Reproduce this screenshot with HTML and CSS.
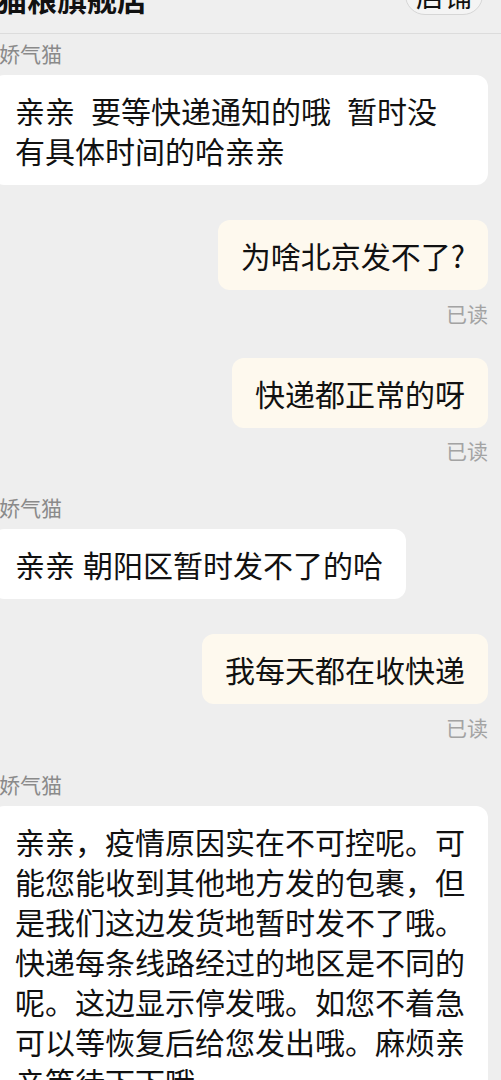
FILE: index.html
```html
<!DOCTYPE html>
<html lang="zh-CN">

<head>
  <meta charset="UTF-8">
  <meta name="viewport" content="width=device-width, initial-scale=1.0">
  <title>娇气猫</title>
  <link rel="stylesheet" href="styles.css">
</head>

<body>
  <header class="topbar">
    <h1 class="topbar__title">猫粮旗舰店</h1>
    <button class="topbar__shop">店铺</button>
  </header>

  <main class="chat">
    <div class="msg msg--in">
      <p class="msg__name">娇气猫</p>
      <p class="msg__bubble">亲亲  要等快递通知的哦  暂时没有具体时间的哈亲亲</p>
    </div>

    <div class="msg msg--out">
      <p class="msg__bubble">为啥北京发不了?</p>
      <p class="msg__read">已读</p>
    </div>

    <div class="msg msg--out">
      <p class="msg__bubble">快递都正常的呀</p>
      <p class="msg__read">已读</p>
    </div>

    <div class="msg msg--in">
      <p class="msg__name">娇气猫</p>
      <p class="msg__bubble">亲亲 朝阳区暂时发不了的哈</p>
    </div>

    <div class="msg msg--out">
      <p class="msg__bubble">我每天都在收快递</p>
      <p class="msg__read">已读</p>
    </div>

    <div class="msg msg--in">
      <p class="msg__name">娇气猫</p>
      <p class="msg__bubble">亲亲，疫情原因实在不可控呢。可能您能收到其他地方发的包裹，但是我们这边发货地暂时发不了哦。快递每条线路经过的地区是不同的呢。这边显示停发哦。如您不着急可以等恢复后给您发出哦。麻烦亲亲等待下下哦</p>
    </div>
  </main>
</body>

</html>
```

FILE: styles.css
```css
* {
  box-sizing: border-box;
}

html,
body {
  margin: 0;
  overflow: hidden;
}

body {
  background-color: #eeeeee;
  color: #111;
  font-family: "Noto Sans CJK SC", "Noto Sans", sans-serif;
}

p,
h1 {
  margin: 0;
}

/* шапка обрезана сверху */
.topbar {
  display: flex;
  justify-content: space-between;
  align-items: flex-end;
  height: 74px;
  margin: -40px 0 0 -3px;
  padding: 0 18px 18px 0;
  border-bottom: 1px solid #dcdcdc;
  background-color: #efefef;
}

.topbar__title {
  margin-bottom: 2px;
  font-size: 30px;
  font-weight: 700;
  line-height: 1;
}

.topbar__shop {
  height: 40px;
  padding: 0 10px;
  border: 1px solid #d6d6d6;
  border-radius: 20px;
  background-color: #f4f4f4;
  color: #111;
  font-family: inherit;
  font-size: 28px;
  line-height: 36px;
}

.chat {
  display: flex;
  flex-direction: column;
  gap: 35px;
  margin-left: -8px;
  padding: 7px 13px 0 0;
}

.msg {
  display: flex;
  flex-direction: column;
}

.msg--in {
  align-items: flex-start;
}

.msg--out {
  align-items: flex-end;
}

.msg__name {
  margin-bottom: 10px;
  padding-left: 7px;
  color: #8a8a8a;
  font-size: 21px;
  line-height: 24px;
}

.msg__bubble {
  max-width: 497px;
  padding: 15px 23px;
  border-radius: 12px;
  background-color: #fff;
  font-size: 30px;
  line-height: 40px;
  word-spacing: 1.3px;
  white-space: pre-wrap;
}

.msg--out .msg__bubble {
  background-color: #fef9ee;
}

.msg__read {
  margin-top: 12.5px;
  color: #a3a3a3;
  font-size: 21px;
  line-height: 20px;
}
```
